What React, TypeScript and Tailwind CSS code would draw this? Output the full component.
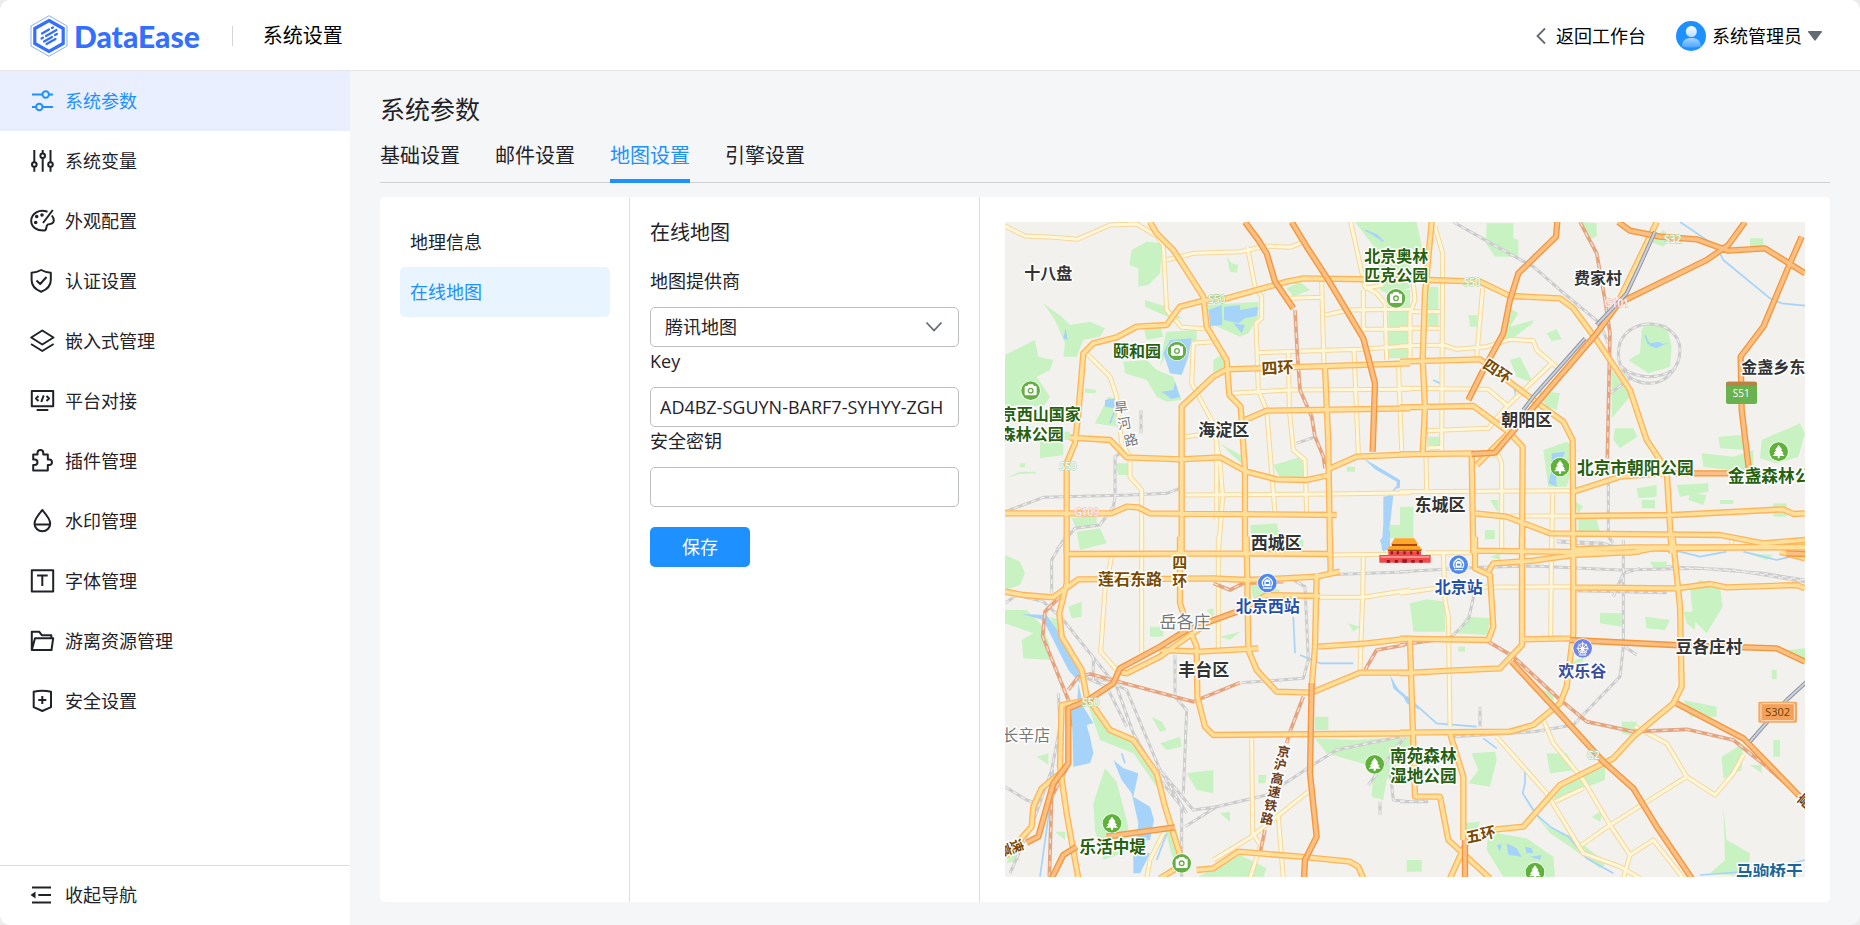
import { useState } from 'react';
import type { ReactNode } from 'react';

const menuItems: { label: string; icon: ReactNode }[] = [
  {
    label: '系统参数',
    icon: (
      <>
        <path d="M2 5.5h10.5M19 5.5h4M2 18h4M12.5 18H23" />
        <circle cx="15.7" cy="5.5" r="3.2" />
        <circle cx="9.3" cy="18" r="3.2" />
      </>
    ),
  },
  {
    label: '系统变量',
    icon: (
      <>
        <path d="M4.3 1v12M4.3 18v4.7M12.7 1v3.3M12.7 9v13.7M20.5 1v12M20.5 18v4.7" />
        <circle cx="4.3" cy="15.5" r="2.3" />
        <circle cx="12.7" cy="6.7" r="2.3" />
        <circle cx="20.5" cy="15.5" r="2.3" />
      </>
    ),
  },
  {
    label: '外观配置',
    icon: (
      <>
        <path d="M17.5 2.8C9.5-.2 1.2 4 1.2 12c0 6 5.5 9.8 13 9.5 3.3-.2 1.3-4.3 3.3-5.7 1.7-1.3 6.3.2 6.3-4.6 0-1.7-.8-3.2-2-4.7M13 14 22.8 1" />
        <circle cx="6.7" cy="7.5" r=".8" fill="currentColor" />
        <circle cx="12" cy="6" r=".8" fill="currentColor" />
        <circle cx="5.7" cy="13.5" r=".8" fill="currentColor" />
      </>
    ),
  },
  {
    label: '认证设置',
    icon: <path d="M11.2 1c3 1.7 6 2.5 9.6 2.7V11c0 5.5-3.5 9.5-9.6 11.8C5.1 20.5 1.6 16.5 1.6 11V3.7C5.2 3.5 8.2 2.7 11.2 1ZM6.5 11.5l3.7 3.5 6.3-7" />,
  },
  {
    label: '嵌入式管理',
    icon: <path d="M12.3 1.5 23.5 8.5 12.3 15.5 1.2 8.5ZM1 15l11.3 7L23.6 15" />,
  },
  {
    label: '平台对接',
    icon: <path d="M1.8 2h21.4v15.3H1.8ZM6.7 21h11.6M8.5 7 6 9.5 8.5 12M16.5 7 19 9.5 16.5 12M13.7 6.3l-2.4 6.7" />,
  },
  {
    label: '插件管理',
    icon: <path d="M3.2 5.5h4.3V4a2.9 2.9 0 0 1 5.8 0v1.5h4.5v5h1.9a2.8 2.8 0 0 1 0 5.5h-1.9v5.5H3.2V16h1.5a2.7 2.7 0 0 0 0-5.5H3.2Z" />,
  },
  {
    label: '水印管理',
    icon: <path d="M12.3 1C8.5 5.5 4.5 9.8 4.5 14.5a7.8 7.8 0 0 0 15.7 0C20.2 9.8 16.2 5.5 12.3 1ZM4.7 15.5H20" />,
  },
  {
    label: '字体管理',
    icon: <path d="M1.8 1.3h21.4v21.2H1.8ZM7 6.5h10.7M12.3 6.5V17" />,
  },
  {
    label: '游离资源管理',
    icon: <path d="M1.8 21V2.8h7.5l2.5 3.4h9.5v3M1.8 21 5 9.2h18.2L21.5 21Z" />,
  },
  {
    label: '安全设置',
    icon: <path d="M3.7 2.8c6-1.3 11.3-1.3 17.3 0v15.4L12.3 22 3.7 18.2ZM12.3 7v8M8.3 11h8" />,
  },
];

const tabs = ['基础设置', '邮件设置', '地图设置', '引擎设置'];

// Map geometry, split in four tiles; every tile has its own origin
const tiles = [
  {
    origin: 'translate(0 0)',
    green:
      'M395 120L440 95 488 100 480 190 445 225 415 230V175L388 165ZM130 280L185 320 210 345 270 335 315 355 300 380 250 390 230 440 190 440 195 400 165 330ZM15 435L105 390 115 440 160 450 150 480 110 500 150 560 130 590 70 585 15 590ZM435 270L500 290 545 325 520 328 435 290ZM500 365L590 360V395L510 405 480 470 495 380ZM620 285L775 275V320L745 370 720 380 640 345ZM370 455L440 450 470 480 520 500 545 570 500 575 470 560 440 510 375 490ZM640 450L670 430 680 480 640 500ZM1065 36H1230V235L1160 250 1140 240 1130 120ZM860 235L900 215 930 240 880 260ZM1165 240H1230V445H1165ZM820 765L905 740 915 800 840 805ZM285 640L325 560 355 570 350 650ZM120 695H190V735L120 745ZM345 760H390V795H355ZM215 925L290 915V945L230 960ZM230 965L300 955 320 1000 240 1020ZM750 945L830 940 850 1020H760ZM1170 945H1230V985H1170ZM680 140L695 160 715 165 710 188 690 185ZM160 665H210V690H160ZM15 660H60V690H15ZM430 350L480 340 490 380 440 390ZM660 700L730 740V765L690 730ZM885 990H910V1010H885ZM60 760H75V772H60ZM1040 770H1065V785H1040ZM15 805L60 785H108V790L60 792ZM255 535L290 540 285 550 255 548Z',
    water:
      'M510 390L575 385 565 440 545 495 510 490 490 430ZM625 300L665 285 667 345 630 348ZM672 290L720 285 720 300 775 290 770 318 735 325 715 340 672 330ZM700 340L735 345 725 370ZM485 545L520 540 525 515 540 560 515 568ZM1150 860L1180 855 1168 960 1165 1020H1145L1150 940ZM1090 745L1130 768 1200 810V832L1190 838V815L1125 778ZM190 385L197 355 203 390ZM315 570L345 565V595L315 590ZM1095 60L1130 75 1150 110 1140 90Z',
    stream: 'M1095 60L1130 75 1150 95M345 600L330 640M1190 830L1165 860',
    minor:
      'M15 48L75 78 160 82 232 88 330 45 410 42 470 78 490 105 500 300 545 352 640 358M500 150L580 130 720 125 800 108 870 112 905 98M742 110L765 230 785 260V325L768 340 775 540 800 600 825 910M1052 36L1095 230 1130 250 1155 280 1160 450M870 265L965 262M965 215L972 470M975 315L1050 300 1230 298M1090 240V360M1080 358H1230M775 428L1080 418 1230 408M700 550L775 545 870 540 1230 538M865 430L868 600 880 720 915 750 920 910M1062 420L1075 730M1195 450L1205 720M260 430L330 500 350 560 365 700 390 740V800L425 840V1030M640 395L580 400 575 520 640 640 660 760 668 860 655 1030M650 660V930M555 855L1000 852 1230 848M555 680L620 672M1095 235L1150 225',
    main:
      'M450 36L470 70 520 120 610 260 620 350 680 450 688 555 722 590 735 780V1030M10 910H335L380 890 415 892 450 910 1010 915M200 1030V760L225 700 235 610 250 430 280 400 350 382 410 350 500 345 540 290 610 272 680 265 860 215 910 205 1230 210M545 1030V590L640 500 680 478 1230 460M210 683L330 690 380 742 540 748 660 742 740 785 830 808 920 810 990 795M735 630L800 602 1230 595M975 470L985 700 990 1030M990 775L1070 740 1230 733',
    highway: 'M735 36L775 90 800 130 825 215 880 295M875 36L920 110 985 210 1090 385 1125 520 1118 725',
    brownRail: 'M885 300L892 430 900 540 935 620 945 680 970 740 975 775',
    rail: 'M15 905L130 862 390 855 500 850 540 835V640M345 862V740L375 720M345 862L340 890 300 945 225 955 170 1020M423 600V670M890 700L940 682',
    express: '',
  },
  {
    origin: 'translate(1200 0)',
    green:
      'M260 40H340V85L355 90V140H285L258 100ZM545 36L590 40V80L560 90ZM0 36H50L70 130 20 110ZM65 230H115V360H65ZM0 240H20V440H0ZM325 290L355 310 330 350 400 330 398 340 345 380 300 390ZM205 315H232L230 350H210ZM735 340L800 345 815 410 810 470 745 490 685 450 720 430 725 360ZM330 450L360 440 375 470 400 520 350 500ZM410 540L480 550 470 600 440 590ZM635 480L680 540 690 560 635 625ZM645 655H700L712 680 660 715 640 690ZM905 730L1000 740 1060 720V790L910 770ZM955 680L1030 675 1040 720 960 715ZM1085 690L1130 670 1200 640 1215 670 1195 740 1130 760 1080 745ZM430 720L500 695 530 720 500 830H445ZM710 835L770 825V860L715 865ZM830 825L925 820V845L840 860ZM725 870H765V895H725ZM870 850L920 855 910 885 865 870ZM1120 880H1160V920H1120ZM535 920L585 910 600 965 535 970ZM0 890H40V985H0ZM255 960H285V988H255ZM1050 85H1090V110H1050ZM440 370L470 358 485 388 455 393ZM85 680H120V705H85ZM270 870H295V910ZM790 60L810 80 790 110 750 95ZM520 870L550 890 535 910ZM960 870H1000V882H960Z',
    water:
      'M455 730L495 725 480 770 468 790 470 830 445 820 455 780ZM740 385L750 400 775 395 790 402 810 395 770 415 750 408ZM340 530L350 530 345 560Z',
    stream: 'M840 36L950 110 970 150 1110 265 1145 280 1215 287M735 375L745 400 770 412M100 510L120 520',
    minor:
      'M105 50L128 130 125 720M40 220L45 270 30 310V450M0 355H120M30 305H120M0 408L130 405 170 418 260 410 330 388 400 392 410 420 475 475M248 235L230 440M0 535L265 538 320 585M460 455L310 600 265 655 80 662M75 590L80 840M0 845L520 842M235 735L295 735 305 760V1030M75 715L125 712M458 850L455 1030M330 918H520M995 980V1005',
    main:
      'M95 36L75 250 68 450 75 590 68 730M0 208L90 210 240 215 330 258 480 265 520 295 590 390 690 540 740 690 800 780 815 1030M0 455L240 448 400 570 490 635 518 690 520 1030M0 592L220 588 325 665 368 710 366 1030M0 733L215 730 220 1030M230 765L325 670M520 845L660 800 790 790M225 910L320 920 450 970 960 975 1090 1000 1215 990M520 918L820 915 1150 898 1180 912 1215 910M520 1018L700 1012 1215 1012M770 36L740 100 660 265',
    highway:
      'M472 36L468 80 355 190 330 270 310 370 250 480 205 570M215 732L285 728 410 580 590 370 655 280 920 150 985 105 1035 36M655 36L690 62 780 80 890 88 985 122 1095 115 1215 190M1205 80L1170 160 1090 350 1022 440 1025 600 1048 790M825 790H1040',
    brownRail: 'M540 36L590 130 615 270 630 370 622 745',
    rail: 'M160 36L290 110 400 170 480 240 600 340 625 400M735 343C790 335 840 370 840 420S800 522 745 520 655 480 655 430 690 350 735 343M660 465C690 500 760 515 820 480M625 745V980L640 1000M470 992L610 1000 670 1020M630 550L690 505',
    express: 'M765 65L720 165 680 250 590 345M555 385L400 560 370 600',
  },
  {
    origin: 'translate(0 990)',
    green:
      'M15 45L60 65 75 100 60 135 15 150ZM15 210H80L130 260 150 320 150 360 70 355 65 300 100 280 15 250ZM150 230L180 240 230 390 200 370ZM245 440L275 500 330 560 400 600 460 700 490 760 470 740 400 640 300 600ZM315 685L350 725 385 860 365 940 310 960 285 870 280 790ZM205 200L245 185V230L215 235ZM455 530L485 545 500 570 480 575ZM450 260H490V290H450ZM480 610L540 590 545 620 500 630ZM560 700L640 690V760L590 750ZM495 870H530L560 990 520 960ZM595 1010L720 945 800 985 790 1010ZM750 130L840 150 820 185 760 180ZM945 595L1060 600 1230 590V620L1160 720 1150 780 1115 770 1120 680 980 640ZM945 530H985V570H945ZM660 820L690 815V845ZM660 290L720 275 690 300ZM775 705H800L795 730H775ZM110 650L145 640V675ZM620 210L640 205V235ZM165 875H195V900ZM1045 250L1080 260 1060 275ZM20 970L40 925 60 960Z',
    water:
      'M65 222L140 225 200 310 235 380 240 430 205 390 170 320 130 240ZM235 430L250 500 280 550 260 555 270 590 280 640 270 670 220 680 215 500 232 480ZM340 660L370 685 415 700 400 770 450 800 462 840 450 900 410 905 415 850 395 760 365 720ZM400 930L450 940 420 1000H400ZM1170 405L1190 440 1220 480 1180 445ZM1140 0L1170 -30V20L1150 35Z',
    stream: 'M880 230L885 340M900 345L960 370 1060 370M160 690L155 760 120 1010M500 880L470 960M365 640L375 670',
    minor:
      'M335 50L315 150 302 335 350 390M425 -10V340M655 -10V325M990 45L1230 42M1090 50L1088 170 1080 390M960 172L1090 172 1230 150M755 595L758 880 785 920M755 890L925 755M755 890L640 960M835 830L850 1015M490 880L450 960 440 1015M780 920L750 1015',
    main:
      'M200 -10V130L178 220 185 290 245 390 260 470 330 570 400 600 470 700 495 800 520 880 545 960M200 42L740 40 990 42M15 155L70 165 160 172 235 118 640 115 740 120 850 115 950 110 1020 95M540 -10V190L550 220 590 320 592 470 615 560 640 585 1230 580M740 -10L745 330 770 390 830 455 935 458 1080 398 1230 398M990 -10L992 95M950 100L945 320 935 440M740 200L800 165 960 168M350 395L380 400 480 350 550 300 600 265M480 330L600 335 775 325M955 320L1100 310 1230 295M265 480L185 495 180 680 200 820 235 1015M15 950L95 860 100 800 125 745 180 700M590 990L640 985 715 935 900 950 1050 965 1075 980 1090 1015M480 1015L545 975',
    highway:
      'M265 480L340 430 360 385 480 320 560 270 710 215M265 480L205 505 205 670 160 730 115 890 80 908M935 430L930 700 950 890 915 960 912 1015M320 890L525 862M230 920L190 945 155 1015',
    brownRail:
      'M180 170L135 215 128 290 205 480 212 560M205 450L235 410 270 402 580 485 720 428M640 130L690 150 730 130 850 125M910 470L870 575 860 610M208 670L155 770 148 1010M795 870L780 940M1095 390L1130 330 1215 315',
    rail: 'M15 190L50 165 130 185 190 240 350 440 400 580 480 720 545 800V1010M280 350V420H320L380 450 480 690 580 810 650 800 800 765 870 720 930 680 1010 630 1200 590M525 345V470L560 510 550 760M725 428L910 415 925 360 915 140 880 120M175 460L180 560 155 690 105 830 30 1000M15 740L80 780 110 790M155 160V60L190 0M960 105L1230 95M555 860L650 800M1170 690L1180 780 1230 785M1140 825V785M1215 590L1105 735M480 690L560 820M250 410L320 440 380 560',
    express: '',
  },
  {
    origin: 'translate(1200 990)',
    green:
      'M30 190L80 178 135 185V275H40ZM165 280L200 230 275 235 260 285ZM600 218L665 220V260L600 250ZM735 230L810 240 795 270 740 265ZM870 145L900 120 960 140 968 200 920 280 880 240ZM850 480L950 500V530L870 530ZM665 545L710 545V590L665 580ZM440 640L500 640 530 690 450 700ZM460 780L480 730 615 680V720ZM215 640L285 635 290 660 270 740 205 730 235 690ZM265 875L380 895 460 950 465 1010H310L260 930ZM365 770L440 860 520 890 620 970 600 985 510 920 450 880ZM965 650L1030 610 1025 690 970 715ZM1120 600H1140V650H1120ZM970 800L980 900 1050 940 1045 1010 930 1000 975 960ZM850 215L885 215V270L860 250ZM20 960H65V995H20ZM575 830L610 810 600 845ZM180 850L240 845 230 880 190 880ZM750 65H800V85H760ZM270 50L300 40V60ZM1050 675H1085V700ZM1115 390H1130V418H1115ZM430 450L460 460V490H430ZM500 370L555 350 540 380ZM175 320H195V335H175ZM1040 40L1120 45 1100 60ZM1160 330L1215 325V370Z',
    water: 'M320 910L350 925 365 950 325 945ZM290 915L305 912 300 935ZM375 920L395 925 400 940 380 940ZM390 950L425 945 420 960ZM0 450L30 480 60 510 20 490Z',
    stream:
      'M250 595L290 625M375 690V730L368 760 410 825 450 860 505 890 560 955 640 1000M20 470L110 550 230 560M680 30L840 35 900 50 980 35M1030 35L1130 60 1215 40M900 1005L1100 990 1215 960',
    minor:
      'M0 160L130 142 520 140M130 40L135 180 145 230 150 560M455 -10L452 290M305 -10V25M75 38H215M290 590L440 760 550 940 660 980M430 540L460 610 550 720 630 855 690 945 670 1015M465 785L550 745M545 915L630 855 860 710M860 710L800 610 705 560M860 710L945 765 1000 700 1030 645M690 945L760 900 850 1015M660 980L720 1015',
    main:
      'M225 -10V85L270 105 280 260 265 300 0 296M225 32L690 38 760 25 1215 20M265 95L280 70 400 62 520 45 720 35M366 -10V315L300 385 150 392 0 400M520 -10V280L500 440 480 490 400 555 330 575 0 578M520 142L830 145 930 132 980 142 1190 135 1215 145M370 298L510 295M818 -10L840 200 845 440 820 490 700 590 640 655 480 735 370 860 290 868 200 905 150 1015M150 580L190 710V900M30 300L45 770H120L145 900 270 1015M1140 35L1215 55',
    highway: 'M335 365L460 500 610 665 700 745 770 860 875 1015M510 300L820 315 1130 325 1215 365M830 490L1030 595 1200 770M195 900V1015M1160 40L1215 42',
    brownRail: 'M265 305L340 350 470 470 560 545 700 575 860 568 1000 600 1100 680 1200 770M0 315L160 292',
    rail: 'M0 95L240 82 400 78 660 90 900 85 1090 100 1215 120M800 80L1000 90 1215 125M670 0V320L660 410 520 555 400 575 160 590M230 130L205 240 150 295M520 152L800 158M470 5L660 20M240 500V560M0 785H85M640 170L670 100 720 85M675 320L710 345',
    express: 'M1220 425L1160 480 1050 605',
  },
];

const GREEN = '#25610f';
const BROWN = '#7a4a00';
const DARK = '#333333';
const BLUE = '#2450ab';
const GREY = '#777777';
const RAIL_BROWN = '#6b3e22';

// [text, center x, center y, colour, size, rotation]
const labels: [string, number, number, string, number, number][] = [
  ['十八盘', 145, 190, DARK, 48, 0],
  ['北京奥林', 1189, 138, GREEN, 48, 0],
  ['匹克公园', 1189, 196, GREEN, 48, 0],
  ['颐和园', 411, 423, GREEN, 48, 0],
  ['京西山国家', 122, 612, GREEN, 48, 0],
  ['森林公园', 95, 672, GREEN, 48, 0],
  ['旱', 363, 592, GREY, 42, -5],
  ['河', 373, 640, GREY, 42, -10],
  ['路', 393, 690, GREY, 42, -15],
  ['海淀区', 671, 660, DARK, 51, 0],
  ['四环', 832, 473, BROWN, 48, -3],
  ['西城区', 829, 997, DARK, 51, 0],
  ['费家村', 1794, 205, DARK, 48, 0],
  ['四环', 1492, 483, BROWN, 45, 35],
  ['朝阳区', 1580, 630, DARK, 51, 0],
  ['金盏乡东', 2320, 472, DARK, 48, 0],
  ['北京市朝阳公园', 1906, 773, GREEN, 50, 0],
  ['金盏森林公园', 2334, 797, GREEN, 50, 0],
  ['东城区', 1320, 885, DARK, 51, 0],
  ['四', 539, 1058, BROWN, 45, 0],
  ['环', 539, 1112, BROWN, 45, 0],
  ['莲石东路', 390, 1108, BROWN, 48, 0],
  ['北京西站', 803, 1189, BLUE, 48, 0],
  ['岳各庄', 555, 1234, GREY, 51, 0],
  ['丰台区', 611, 1380, DARK, 51, 0],
  ['长辛店', 79, 1576, GREY, 48, 0],
  ['京', 851, 1625, RAIL_BROWN, 39, 10],
  ['沪', 841, 1664, RAIL_BROWN, 39, 10],
  ['高', 832, 1706, RAIL_BROWN, 39, 10],
  ['速', 823, 1746, RAIL_BROWN, 39, 10],
  ['铁', 812, 1786, RAIL_BROWN, 39, 10],
  ['路', 801, 1826, RAIL_BROWN, 39, 10],
  ['乐活中堤', 338, 1909, GREEN, 50, 0],
  ['南苑森林', 1270, 1636, GREEN, 50, 0],
  ['湿地公园', 1270, 1696, GREEN, 50, 0],
  ['速', 50, 1908, BROWN, 42, 70],
  ['高', 14, 1922, BROWN, 42, 70],
  ['北京站', 1376, 1132, BLUE, 48, 0],
  ['欢乐谷', 1747, 1384, '#3a4c9c', 48, 0],
  ['豆各庄村', 2127, 1309, DARK, 50, 0],
  ['五环', 1442, 1873, BROWN, 45, -12],
  ['高', 2414, 1773, RAIL_BROWN, 42, -50],
  ['马驹桥干', 2308, 1986, '#1a6597', 50, 0],
];

const roadNumbers: [string, number, number, string][] = [
  ['S50', 650, 268, '#a5d29b'],
  ['S50', 204, 768, '#b5dbc0'],
  ['G109', 260, 907, '#f4b8b0'],
  ['S50', 1417, 216, '#b5dba8'],
  ['S32', 2018, 88, '#b5dba8'],
  ['G101', 1850, 280, '#f4b8b0'],
  ['S50', 272, 1477, '#b5dba8'],
  ['G2', 1780, 1635, '#a8d8c0'],
];

const cameras = [[531, 423], [92, 542], [1188, 265], [545, 1960]];
const trees = [[1680, 771], [2336, 725], [336, 1840], [1124, 1663], [1605, 1986]];
const stations = [[802, 1119], [1376, 1064]];

function MapLayer({ name, color, width, dash }: {
  name: 'green' | 'water' | 'stream' | 'minor' | 'main' | 'highway' | 'brownRail' | 'rail' | 'express';
  color: string;
  width?: number;
  dash?: string;
}) {
  return (
    <g
      fill={width ? 'none' : color}
      stroke={width ? color : 'none'}
      strokeWidth={width}
      strokeDasharray={dash}
      strokeLinejoin="round"
    >
      {tiles.map((tile) => (
        <path key={tile.origin} transform={tile.origin} d={tile[name]} />
      ))}
    </g>
  );
}

function CityMap() {
  return (
    <svg
      viewBox="15 36 2400 1965"
      preserveAspectRatio="xMidYMid slice"
      className="h-full w-full bg-[#f2f1ee]"
      role="img"
      aria-label="在线地图"
    >
      <MapLayer name="green" color="#c9f2c3" />
      <MapLayer name="water" color="#a6d3fa" />
      <MapLayer name="stream" color="#a6d3fa" width={5} />
      <MapLayer name="rail" color="#cccccc" width={9} />
      <MapLayer name="rail" color="#eeeeee" width={4} dash="14 14" />
      <MapLayer name="minor" color="#f5d79c" width={15} />
      <MapLayer name="minor" color="#fff7d9" width={9} />
      <MapLayer name="brownRail" color="#e5a47e" width={11} />
      <MapLayer name="brownRail" color="#f6ded0" width={4} dash="16 18" />
      <MapLayer name="main" color="#ffb45c" width={19} />
      <MapLayer name="main" color="#ffe09a" width={11} />
      <MapLayer name="highway" color="#f5963a" width={19} />
      <MapLayer name="highway" color="#fabf82" width={11} />
      <MapLayer name="express" color="#8f94a3" width={12} />
      <MapLayer name="express" color="#ccd0da" width={6} />

      {/* Gate tower */}
      <g>
        <path d="M1172 1004L1184 985H1243L1255 1004ZM1160 1021L1170 1008H1258L1268 1021Z" fill="#ffa62b" />
        <path d="M1176 1002H1251V1008H1176ZM1164 1019H1264V1024H1164Z" fill="#a84a10" />
        <path d="M1165 1024H1263V1036H1165ZM1138 1035H1292V1058H1138Z" fill="#f04a4c" />
        <path d="M1172 1024h7v9h-7ZM1190 1024h7v9h-7ZM1210 1024h7v9h-7ZM1230 1024h7v9h-7ZM1250 1024h7v9h-7ZM1160 1050h10v8h-10ZM1184 1050h10v8h-10ZM1207 1048h14v10h-14ZM1234 1050h10v8h-10ZM1258 1050h10v8h-10Z" fill="#9c1626" />
        <path d="M1142 1041H1288" stroke="#ffd9d0" strokeWidth="3" />
      </g>

      {roadNumbers.map(([text, x, y, color]) => (
        <text
          key={`${text}-${x}`}
          x={x}
          y={y + 11}
          textAnchor="middle"
          fontSize={30}
          fill="#ffffff"
          stroke={color}
          strokeWidth={4}
          paintOrder="stroke"
        >
          {text}
        </text>
      ))}

      {/* Road shields */}
      <rect x="2178" y="515" width="93" height="67" rx="6" fill="#6ab150" />
      <path d="M2178 528V521q0-6 6-6h81q6 0 6 6v7Z" fill="#b98346" />
      <text x="2224" y="561" textAnchor="middle" fontSize={30} fill="#ffffff">S51</text>
      <rect x="2275" y="1475" width="116" height="63" rx="4" fill="#f4a866" />
      <rect x="2283" y="1481" width="100" height="51" rx="4" fill="#f3a05a" stroke="#fde0c4" strokeWidth="3" />
      <text x="2333" y="1517" textAnchor="middle" fontSize={33} fill="#6e4107">S302</text>

      {cameras.map(([x, y]) => (
        <g key={`${x}-${y}`} transform={`translate(${x} ${y})`}>
          <circle r="30" fill="#ffffff" />
          <circle r="28" fill="#65ae45" />
          <path d="M-18-10q0-4 4-4h4l3-5h14l3 5h4q4 0 4 4v20q0 4-4 4h-28q-4 0-4-4Z" fill="#ffffff" />
          <circle r="7" fill="none" stroke="#65ae45" strokeWidth="4" />
        </g>
      ))}
      {trees.map(([x, y]) => (
        <g key={`${x}-${y}`} transform={`translate(${x} ${y})`}>
          <circle r="30" fill="#ffffff" />
          <circle r="28" fill="#5fb13a" />
          <path d="M0-20 11-5H7L15 5H10L18 13H3V20H-3V13H-18L-10 5H-15L-7-5H-11Z" fill="#ffffff" />
        </g>
      ))}
      {stations.map(([x, y]) => (
        <g key={`${x}-${y}`} transform={`translate(${x} ${y})`}>
          <circle r="30" fill="#ffffff" />
          <circle r="28" fill="#4f87f0" />
          <path d="M-11 10C-18 2-17-10 0-18 17-10 18 2 11 10" fill="none" stroke="#ffffff" strokeWidth="4" />
          <path d="M-9-3q0-8 9-8t9 8V9H-9ZM-13 13H13V17H-13Z" fill="#ffffff" />
          <path d="M-5-3H5V3H-5Z" fill="#4f87f0" />
        </g>
      ))}
      <g transform="translate(1748 1315)">
        <circle r="30" fill="#ffffff" />
        <circle r="28" fill="#7186ea" />
        <g fill="none" stroke="#ffffff" strokeWidth="3">
          <circle r="14" />
          <circle r="4" fill="#ffffff" />
          <path d="M0-20V14M-18 0H18M-13-13 13 13M13-13-13 13M0 2-10 20H10Z" />
        </g>
      </g>

      {labels.map(([text, x, y, color, size, angle]) => (
        <text
          key={`${text}-${x}-${y}`}
          transform={`translate(${x} ${y}) rotate(${angle})`}
          y={size * 0.37}
          textAnchor="middle"
          fontSize={size}
          fill={color}
          stroke="#ffffff"
          strokeWidth={9}
          strokeLinejoin="round"
          paintOrder="stroke"
          className={color === GREY ? 'font-normal' : 'font-bold'}
        >
          {text}
        </text>
      ))}
    </svg>
  );
}

function Logo() {
  return (
    <a href="#" className="flex items-center gap-1.5 text-[#3370ff]">
      <svg width="38" height="42" viewBox="0 0 38 42" fill="none" stroke="currentColor">
        <path d="M19 .7 37 11V31L19 41.3 1 31V11Z" strokeWidth=".8" opacity=".7" />
        <path d="M19 5.5 33.2 13.5V28.5L19 36.5 4.8 28.5V13.5Z" strokeWidth="3.2" />
        <g strokeWidth="2.2" strokeLinecap="round">
          <path d="M12 18.5 19 14.5M22 13 23 12.5M11.5 23.5 13 22.6M16 21 26.5 15M14 26.5 22 22M25 20 27 19M16.5 29 25.5 24" />
        </g>
      </svg>
      <span className="font-[Lato,sans-serif] text-[30px] leading-8 font-black">DataEase</span>
    </a>
  );
}

export default function App() {
  const [activeMenu, setActiveMenu] = useState('系统参数');
  const [activeTab, setActiveTab] = useState('地图设置');
  const [provider, setProvider] = useState('腾讯地图');
  const [mapKey, setMapKey] = useState('AD4BZ-SGUYN-BARF7-SYHYY-ZGH');
  const [securityKey, setSecurityKey] = useState('');

  return (
    <div className="h-screen bg-[#ececec] font-['Open_Sans','Noto_Sans_CJK_SC',sans-serif] text-[#1f2329]">
      <div className="flex h-full flex-col overflow-hidden rounded-[10px] bg-[#f5f6f7]">
        <header className="flex h-[71px] shrink-0 items-center border-b border-[#e4e5e7] bg-white pt-0.5 pr-[38px] pl-[30px] text-black">
          <Logo />
          <div className="ml-8 h-5 w-px bg-[#d5d6d8]" />
          <span className="ml-[30px] text-[20px] leading-7">系统设置</span>
          <div className="ml-auto flex items-center text-[18px] leading-6">
            <a href="#" className="flex items-center gap-2.5">
              <svg width="10" height="18" viewBox="0 0 10 18" fill="none" stroke="#646a73" strokeWidth="1.8">
                <path d="M9 1.5 1.5 9 9 16.5" />
              </svg>
              返回工作台
            </a>
            <button type="button" className="ml-[30px] flex items-center gap-1.5">
              <svg width="30" height="30" viewBox="0 0 30 30">
                <defs>
                  <linearGradient id="avatarHead" x1="0" y1="0" x2="0" y2="1">
                    <stop offset="0" stopColor="#ffffff" />
                    <stop offset="1" stopColor="#b5dbff" />
                  </linearGradient>
                  <linearGradient id="avatarBody" x1="0" y1="0" x2="0" y2="1">
                    <stop offset="0" stopColor="#a5d3ff" />
                    <stop offset="1" stopColor="#4ba6ff" />
                  </linearGradient>
                </defs>
                <circle cx="15" cy="15" r="15" fill="#1e90ff" />
                <circle cx="15.3" cy="10.5" r="5.5" fill="url(#avatarHead)" />
                <path d="M6 25.5C6 19.500 9.5 17 15.3 17S24.7 19.5 24.7 25.5Q15 27.5 6 25.5Z" fill="url(#avatarBody)" />
              </svg>
              系统管理员
              <svg width="14" height="10" viewBox="0 0 14 10" fill="#646a73">
                <path d="M.5 0h13q.7.5.2 1.2L7.7 9.3q-.7.7-1.4 0L.3 1.2Q-.2.5.5 0Z" />
              </svg>
            </button>
          </div>
        </header>

        <div className="flex min-h-0 flex-1">
          <aside className="flex w-[350px] shrink-0 flex-col bg-white">
            <nav className="min-h-0 flex-1 overflow-hidden">
              {menuItems.map((item) => (
                <button
                  key={item.label}
                  type="button"
                  onClick={() => setActiveMenu(item.label)}
                  className={`flex h-[60px] w-full items-center gap-[11px] pl-[30px] text-[18px] leading-6 ${
                    activeMenu === item.label ? 'bg-[#e9efff] text-[#1e90ff]' : 'text-[#1f2329]'
                  }`}
                >
                  <svg
                    width="24"
                    height="24"
                    viewBox="0 0 24 24"
                    fill="none"
                    stroke="currentColor"
                    strokeWidth="2"
                    strokeLinejoin="round"
                    className="shrink-0 overflow-visible"
                  >
                    {item.icon}
                  </svg>
                  {item.label}
                </button>
              ))}
            </nav>
            <button
              type="button"
              className="flex h-[60px] shrink-0 items-center gap-[11px] border-t border-[#d9dadc] pb-0.5 pl-[30px] text-[18px] leading-6"
            >
              <svg width="24" height="24" viewBox="0 0 24 24" fill="none" stroke="currentColor" strokeWidth="2">
                <path d="M2 4.5H21M8.3 12H21M2 19.5H21" />
                <path d="M5.5 8.5V15.5L.5 12Z" fill="currentColor" stroke="none" />
              </svg>
              收起导航
            </button>
          </aside>

          <main className="flex min-w-0 flex-1 flex-col px-[30px] pb-[23px]">
            <h1 className="mt-5 text-[25px] leading-9">系统参数</h1>
            <div role="tablist" className="mt-2 flex gap-[35px] border-b border-[#d0d3d6]">
              {tabs.map((tab) => (
                <button
                  key={tab}
                  type="button"
                  role="tab"
                  aria-selected={activeTab === tab}
                  onClick={() => setActiveTab(tab)}
                  className={`-mb-px h-12 border-b-4 pb-0.5 text-[20px] leading-7 ${
                    activeTab === tab ? 'border-[#1e90ff] text-[#1e90ff]' : 'border-transparent'
                  }`}
                >
                  {tab}
                </button>
              ))}
            </div>

            <div className="mt-3.5 flex min-h-0 flex-1 overflow-hidden rounded-[5px] bg-white text-[18px] leading-6">
              <div className="w-[250px] shrink-0 border-r border-[#dcdee0] py-5 pr-[19px] pl-5">
                <button type="button" className="h-[50px] w-full rounded-[5px] px-2.5 text-left">
                  地理信息
                </button>
                <button type="button" className="h-[50px] w-full rounded-[5px] bg-[#e8f4ff] px-2.5 text-left text-[#1e90ff]">
                  在线地图
                </button>
              </div>

              <form className="flex w-[350px] shrink-0 flex-col border-r border-[#dcdee0] px-5 pt-5" onSubmit={(e) => e.preventDefault()}>
                <h2 className="text-[20px] leading-8">在线地图</h2>
                <label htmlFor="provider" className="mt-[18px] pt-0.5 pb-3.5">地图提供商</label>
                <div className="relative">
                  <select
                    id="provider"
                    value={provider}
                    onChange={(e) => setProvider(e.target.value)}
                    className="h-10 w-full appearance-none rounded-[5px] border border-[#bbbfc4] bg-white px-3.5"
                  >
                    <option>腾讯地图</option>
                    <option>高德地图</option>
                  </select>
                  <svg
                    width="18"
                    height="12"
                    viewBox="0 0 18 12"
                    fill="none"
                    stroke="#646a73"
                    strokeWidth="1.8"
                    className="pointer-events-none absolute top-3.5 right-4"
                  >
                    <path d="M1.5 1.5 9 9.5 16.5 1.5" />
                  </svg>
                </div>
                <label htmlFor="map-key" className="pt-0.5 pb-3.5">Key</label>
                <input
                  id="map-key"
                  type="text"
                  value={mapKey}
                  onChange={(e) => setMapKey(e.target.value)}
                  className="h-10 w-full rounded-[5px] border border-[#bbbfc4] px-[9px]"
                />
                <label htmlFor="security-key" className="pt-0.5 pb-3.5">安全密钥</label>
                <input
                  id="security-key"
                  type="text"
                  value={securityKey}
                  onChange={(e) => setSecurityKey(e.target.value)}
                  className="h-10 w-full rounded-[5px] border border-[#bbbfc4] px-[9px]"
                />
                <button type="submit" className="mt-5 h-10 w-[100px] rounded-[5px] bg-[#1e90ff] text-white">
                  保存
                </button>
              </form>

              <div className="min-w-0 flex-1 p-[25px]">
                <CityMap />
              </div>
            </div>
          </main>
        </div>
      </div>
    </div>
  );
}
